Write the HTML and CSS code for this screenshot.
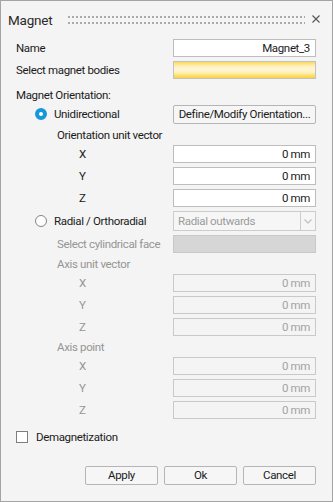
FILE: index.html
```html
<!DOCTYPE html>
<html lang="en">

<head>
    <meta charset="UTF-8">
    <title>Magnet</title>
    <link rel="stylesheet" href="styles.css">
</head>

<body>
    <div class="window">
        <div class="titlebar">
            <span class="title">Magnet</span>
            <span class="grip"></span>
            <svg class="close" width="8" height="8" viewBox="0 0 8 8">
                <path d="M0.5 0.5 L7.5 7.5 M7.5 0.5 L0.5 7.5" stroke="#555" stroke-width="1.1" fill="none" />
            </svg>
        </div>

        <div class="content">
            <div class="row">
                <span class="label">Name</span>
                <div class="field">Magnet_3</div>
            </div>
            <div class="row">
                <span class="label">Select magnet bodies</span>
                <div class="field picker"></div>
            </div>

            <div class="text-row section">
                <span class="label">Magnet Orientation:</span>
            </div>
            <div class="row">
                <span class="label radio-label"><span class="radio checked"></span>Unidirectional</span>
                <div class="button wide">Define/Modify Orientation...</div>
            </div>
            <div class="text-row sub">
                <span class="label l2">Orientation unit vector</span>
            </div>
            <div class="row">
                <span class="label l3">X</span>
                <div class="field">0 mm</div>
            </div>
            <div class="row">
                <span class="label l3">Y</span>
                <div class="field">0 mm</div>
            </div>
            <div class="row">
                <span class="label l3">Z</span>
                <div class="field">0 mm</div>
            </div>

            <div class="row tall">
                <span class="label radio-label"><span class="radio"></span>Radial / Orthoradial</span>
                <div class="combo">
                    <span class="combo-text">Radial outwards</span>
                    <span class="combo-arrow">
                        <svg width="8" height="5" viewBox="0 0 8 5">
                            <path d="M0.5 0.5 L4 4 L7.5 0.5" stroke="#c4c4c4" stroke-width="1.4" fill="none" />
                        </svg>
                    </span>
                </div>
            </div>
            <div class="row">
                <span class="label l2 off">Select cylindrical face</span>
                <div class="field face"></div>
            </div>
            <div class="text-row sub1">
                <span class="label l2 off">Axis unit vector</span>
            </div>
            <div class="row">
                <span class="label l3 off">X</span>
                <div class="field off">0 mm</div>
            </div>
            <div class="row">
                <span class="label l3 off">Y</span>
                <div class="field off">0 mm</div>
            </div>
            <div class="row">
                <span class="label l3 off">Z</span>
                <div class="field off">0 mm</div>
            </div>
            <div class="text-row sub1">
                <span class="label l2 off">Axis point</span>
            </div>
            <div class="row">
                <span class="label l3 off">X</span>
                <div class="field off">0 mm</div>
            </div>
            <div class="row">
                <span class="label l3 off">Y</span>
                <div class="field off">0 mm</div>
            </div>
            <div class="row">
                <span class="label l3 off">Z</span>
                <div class="field off">0 mm</div>
            </div>

            <div class="text-row demag">
                <span class="label check-label"><span class="checkbox"></span>Demagnetization</span>
            </div>

            <div class="actions">
                <div class="button">Apply</div>
                <div class="button">Ok</div>
                <div class="button">Cancel</div>
            </div>
        </div>
    </div>
</body>

</html>
```

FILE: styles.css
```css
body {
    margin: 0;
    padding: 0;
    font-family: Roboto, "Liberation Sans", Arial, sans-serif;
    font-size: 11.5px;
    letter-spacing: -0.35px;
    color: #1b1b1b;
}

.window {
    width: 333px;
    height: 502px;
    box-sizing: border-box;
    border: 1px solid #a4a4a4;
    background-color: #f4f4f4;
}

/* title bar with drag grip */
.titlebar {
    height: 36px;
    box-sizing: border-box;
    display: flex;
    align-items: flex-start;
    padding: 11px 12px 0 7px;
}

.title {
    font-size: 13.5px;
    letter-spacing: -0.2px;
    line-height: 16px;
    color: #2a2a2a;
}

.grip {
    flex: 1;
    height: 10px;
    margin: 3px 7px 0 14px;
    background-image: radial-gradient(circle, #aaaaaa 0.9px, transparent 1.1px);
    background-size: 4px 6px;
    background-position: 0 -1px;
}

.close {
    margin-top: 3px;
}

.content {
    padding: 0 16px 0 15px;
}

.row {
    height: 22px;
    display: flex;
    align-items: center;
    justify-content: space-between;
}

.row.tall {
    height: 24px;
}

.text-row {
    height: 16px;
    display: flex;
    align-items: center;
}

.section {
    margin-top: 6px;
}

.sub {
    margin-top: 2px;
}

.sub1 {
    margin-top: 1px;
}

.demag {
    margin-top: 8px;
}

.label {
    line-height: 16px;
    white-space: nowrap;
}

.label.l2 {
    padding-left: 41px;
}

.label.l3 {
    padding-left: 63px;
}

.label.off {
    color: #959595;
}

.radio-label {
    display: flex;
    align-items: center;
    padding-left: 19px;
}

.radio {
    width: 12px;
    height: 12px;
    box-sizing: border-box;
    border-radius: 50%;
    border: 1px solid #858585;
    background-color: #fdfdfd;
    margin-right: 7px;
}

.radio.checked {
    border: 4px solid #1497db;
    background-color: #fff;
}

.check-label {
    display: flex;
    align-items: center;
}

.checkbox {
    width: 12px;
    height: 12px;
    box-sizing: border-box;
    border: 1px solid #7e7e7e;
    background-color: #fff;
    margin-right: 8px;
}

.field {
    width: 143px;
    height: 18px;
    box-sizing: border-box;
    border: 1px solid #bdbdbd;
    background-color: #fff;
    text-align: right;
    padding-right: 5px;
    line-height: 16px;
}

.field.off {
    background-color: #f4f4f4;
    border-color: #c9c9c9;
    color: #a3a3a3;
}

.field.face {
    background-color: #d6d6d6;
    border-color: #c8c8c8;
}

.field.picker {
    border-color: #c2c2c2;
    background: linear-gradient(to bottom, #fbd95a 0%, #fff0b6 25%, #fff6d6 45%, #fff1bd 65%, #fde17a 82%, #fbd333 100%);
}

.combo {
    width: 143px;
    height: 20px;
    box-sizing: border-box;
    border: 1px solid #cccccc;
    background-color: #f6f6f6;
    display: flex;
}

.combo-text {
    flex: 1;
    padding-left: 4px;
    line-height: 18px;
    color: #9b9b9b;
}

.combo-arrow {
    width: 14px;
    border-left: 1px solid #cccccc;
    display: flex;
    align-items: center;
    justify-content: center;
}

.button {
    width: 73px;
    height: 19px;
    box-sizing: border-box;
    border: 1px solid #b5b5b5;
    border-radius: 2px;
    background-color: #f6f6f6;
    text-align: center;
    line-height: 17px;
    white-space: nowrap;
}

.button.wide {
    width: 143px;
}

.actions {
    margin-top: 21px;
    display: flex;
    justify-content: flex-end;
    gap: 6px;
}
```
